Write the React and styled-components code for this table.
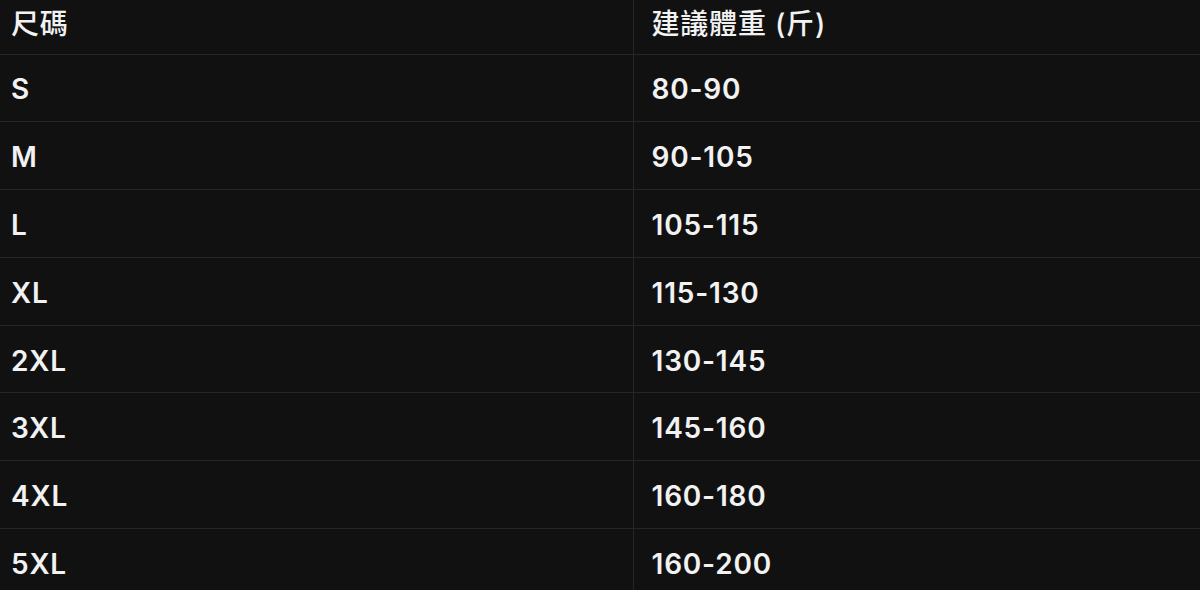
import styled, { createGlobalStyle } from 'styled-components';

const Global = createGlobalStyle`
    html, body {
        margin: 0;
        padding: 0;
        background: #111111;
        overflow: hidden;
    }
`

const sizes = [
    ['S', '80-90'],
    ['M', '90-105'],
    ['L', '105-115'],
    ['XL', '115-130'],
    ['2XL', '130-145'],
    ['3XL', '145-160'],
    ['4XL', '160-180'],
    ['5XL', '160-200'],
]

const Table = styled.table`
    width: 1200px;
    border-collapse: collapse;
    table-layout: fixed;
    background: #111111;
    color: #f2f2f2;
    font-family: Inter, "Noto Sans CJK TC", sans-serif;
    font-size: 28px;
    font-weight: 600;
`

const HeadCell = styled.th`
    height: 54px;
    padding: 0 0 9px ${p => (p.$right ? '18px' : '11px')};
    width: ${p => (p.$right ? 'auto' : '633px')};
    text-align: left;
    font-weight: 500;
    letter-spacing: 0.8px;
    border-bottom: 1px solid #262626;
    border-left: ${p => (p.$right ? '1px solid #262626' : 'none')};
    box-sizing: border-box;
`

const Cell = styled.td`
    height: 67.8px;
    padding: 3px 0 0 ${p => (p.$right ? '18px' : '11px')};
    border-bottom: 1px solid #262626;
    border-left: ${p => (p.$right ? '1px solid #262626' : 'none')};
    box-sizing: border-box;
    vertical-align: middle;
    letter-spacing: 0.8px;
`

export default function App() {
    return (
        <>
            <Global />
            <Table>
                <thead>
                    <tr>
                        <HeadCell>尺碼</HeadCell>
                        <HeadCell $right>建議體重 (斤)</HeadCell>
                    </tr>
                </thead>
                <tbody>
                    {sizes.map(([size, weight]) => (
                        <tr key={size}>
                            <Cell>{size}</Cell>
                            <Cell $right>{weight}</Cell>
                        </tr>
                    ))}
                </tbody>
            </Table>
        </>
    )
}
